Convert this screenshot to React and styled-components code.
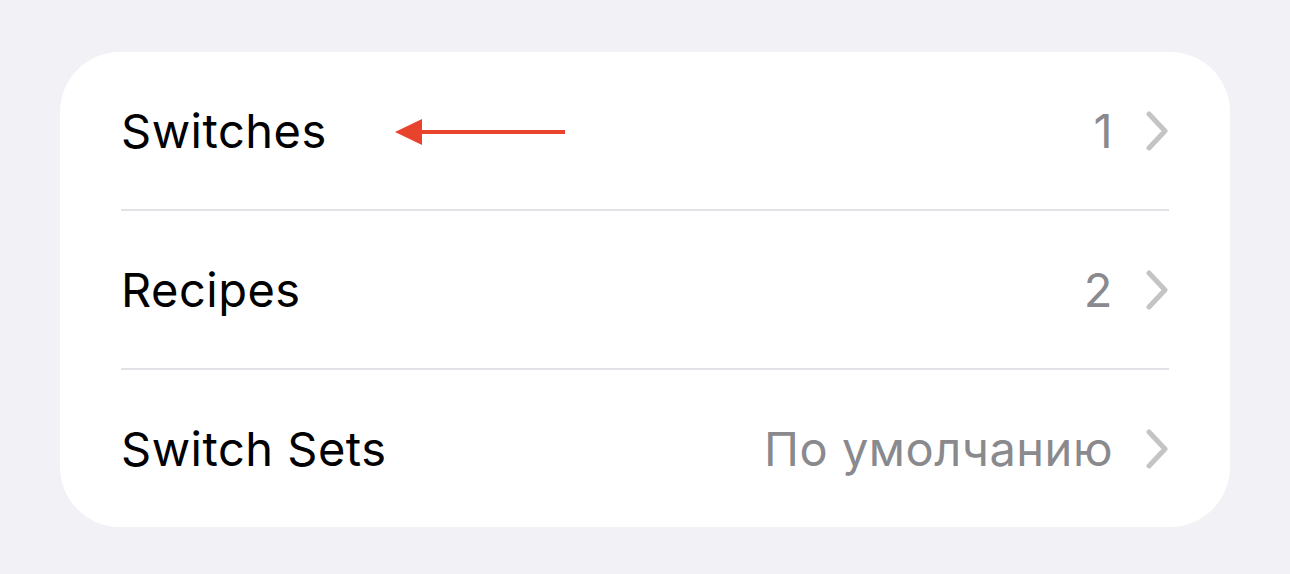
import React from "react";
import styled, { createGlobalStyle } from "styled-components";

const GlobalStyle = createGlobalStyle`
  html, body {
    margin: 0;
    padding: 0;
    background: #f1f1f6;
  }
  body {
    font-family: Inter, "Noto Sans", "Liberation Sans", sans-serif;
    -webkit-font-smoothing: antialiased;
  }
`;

const rows = [
  { label: "Switches", value: "1", pointer: true },
  { label: "Recipes", value: "2" },
  { label: "Switch Sets", value: "По умолчанию" },
];

function Chevron() {
  return (
    <svg width="24" height="40" viewBox="0 0 24 40" fill="none">
      <path
        d="M4 3 L20 20 L4 37"
        stroke="#c4c4c7"
        strokeWidth="5"
        strokeLinecap="round"
        strokeLinejoin="round"
      />
    </svg>
  );
}

function PointerArrow() {
  return (
    <svg width="174" height="30" viewBox="0 0 174 30">
      <line x1="20" y1="15" x2="170" y2="15" stroke="#e8432d" strokeWidth="4" />
      <polygon points="0,15 27,2 27,28" fill="#e8432d" />
    </svg>
  );
}

export default function App() {
  return (
    <>
      <GlobalStyle />
      <Page>
        <Card>
          {rows.map((row, i) => (
            <React.Fragment key={row.label}>
              {i > 0 && <Separator />}
              <Row>
                <Label>
                  {row.label}
                  {row.pointer && (
                    <ArrowWrap>
                      <PointerArrow />
                    </ArrowWrap>
                  )}
                </Label>
                <Trailing>
                  <Value>{row.value}</Value>
                  <Chevron />
                </Trailing>
              </Row>
            </React.Fragment>
          ))}
        </Card>
      </Page>
    </>
  );
}

const Page = styled.div`
  padding: 52px 60px 46px;
`;

const Card = styled.div`
  background: #ffffff;
  border-radius: 60px;
  display: flex;
  flex-direction: column;
  padding: 0 61px 0 61px;
`;

const Row = styled.div`
  height: 157px;
  display: flex;
  align-items: center;
  justify-content: space-between;
`;

const Label = styled.div`
  display: flex;
  align-items: center;
  font-size: 47px;
  color: #000000;
  letter-spacing: 0.5px;
`;

const ArrowWrap = styled.span`
  display: flex;
  margin-left: 68px;
  margin-top: 2px;
`;

const Trailing = styled.div`
  display: flex;
  align-items: center;
  gap: 32px;
`;

const Value = styled.span`
  font-size: 47px;
  color: #8a8a8e;
  letter-spacing: 0.5px;
`;

const Separator = styled.div`
  height: 2px;
  background: #e2e2e6;
`;
